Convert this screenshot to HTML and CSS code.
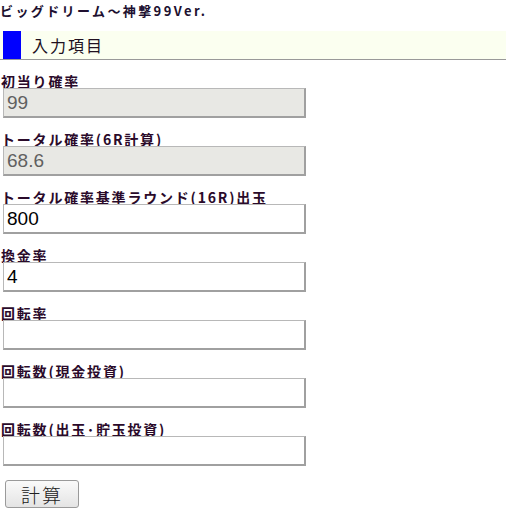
FILE: index.html
```html
<!DOCTYPE html>
<html lang="ja">
<head>
    <meta charset="UTF-8">
    <title>ビッグドリーム〜神撃99Ver.</title>
    <link rel="stylesheet" href="styles.css">
</head>
<body>
    <div class="page-title">ビッグドリーム〜神撃99Ver.</div>

    <h2 class="section-head">入力項目</h2>

    <form class="calc-form" onsubmit="return false;">
        <div class="field">
            <label>初当り確率</label>
            <input type="text" value="99" disabled>
        </div>
        <div class="field">
            <label>トータル確率(6R計算)</label>
            <input type="text" value="68.6" disabled>
        </div>
        <div class="field">
            <label>トータル確率基準ラウンド(16R)出玉</label>
            <input type="text" value="800">
        </div>
        <div class="field">
            <label>換金率</label>
            <input type="text" value="4">
        </div>
        <div class="field">
            <label>回転率</label>
            <input type="text">
        </div>
        <div class="field">
            <label>回転数(現金投資)</label>
            <input type="text">
        </div>
        <div class="field">
            <label>回転数(出玉･貯玉投資)</label>
            <input type="text">
        </div>
        <button class="calc-button" type="submit">計算</button>
    </form>
</body>
</html>
```

FILE: styles.css
```css
* {
    margin: 0;
    padding: 0;
    box-sizing: border-box;
}

body {
    font-family: "Liberation Sans", "Noto Sans CJK JP", sans-serif;
    background: #ffffff;
    color: #201030;
    width: 512px;
}

.page-title {
    font-family: "Noto Sans CJK JP", sans-serif;
    font-size: 13px;
    font-weight: bold;
    letter-spacing: 2.4px;
    line-height: 18px;
    padding: 2px 0 0 0;
    height: 31px;
    white-space: nowrap;
}

.section-head {
    display: flex;
    align-items: center;
    height: 29px;
    width: 506px;
    background: #fbfff0;
    border-bottom: 1px solid #999999;
    font-family: "Noto Sans CJK JP", sans-serif;
    font-size: 16px;
    font-weight: normal;
    letter-spacing: 2px;
    color: #201020;
}

.section-head::before {
    content: "";
    width: 18px;
    height: 28px;
    margin: 0 11px 0 3px;
    background: #0000ff;
}

.calc-form {
    padding-top: 14px;
}

.field {
    display: flex;
    flex-direction: column;
    margin-bottom: 14px;
}

.field label {
    font-family: "Noto Sans CJK JP", sans-serif;
    font-size: 14px;
    font-weight: bold;
    letter-spacing: 1.8px;
    line-height: 14px;
    color: #2a0a2a;
    padding-left: 1px;
    white-space: nowrap;
}

.field input {
    width: 303px;
    height: 30px;
    margin-left: 3px;
    padding: 0 3px;
    font-family: "Liberation Sans", sans-serif;
    font-size: 19px;
    color: #000000;
    background: #ffffff;
    border: 1px solid #b8b8b8;
    border-right: 2px solid #a0a0a0;
    border-bottom: 2px solid #a0a0a0;
}

.field input:disabled {
    background: #e8e8e4;
    color: #606060;
}

.calc-button {
    margin: 0 0 0 5px;
    width: 74px;
    height: 28px;
    padding: 0;
    font-family: "Noto Sans CJK JP", sans-serif;
    font-size: 19px;
    font-weight: 300;
    line-height: 1;
    letter-spacing: 2px;
    color: #202020;
    background: linear-gradient(#fafafa, #e4e4e4);
    border: 1px solid #9a9a9a;
    border-radius: 3px;
}
```
